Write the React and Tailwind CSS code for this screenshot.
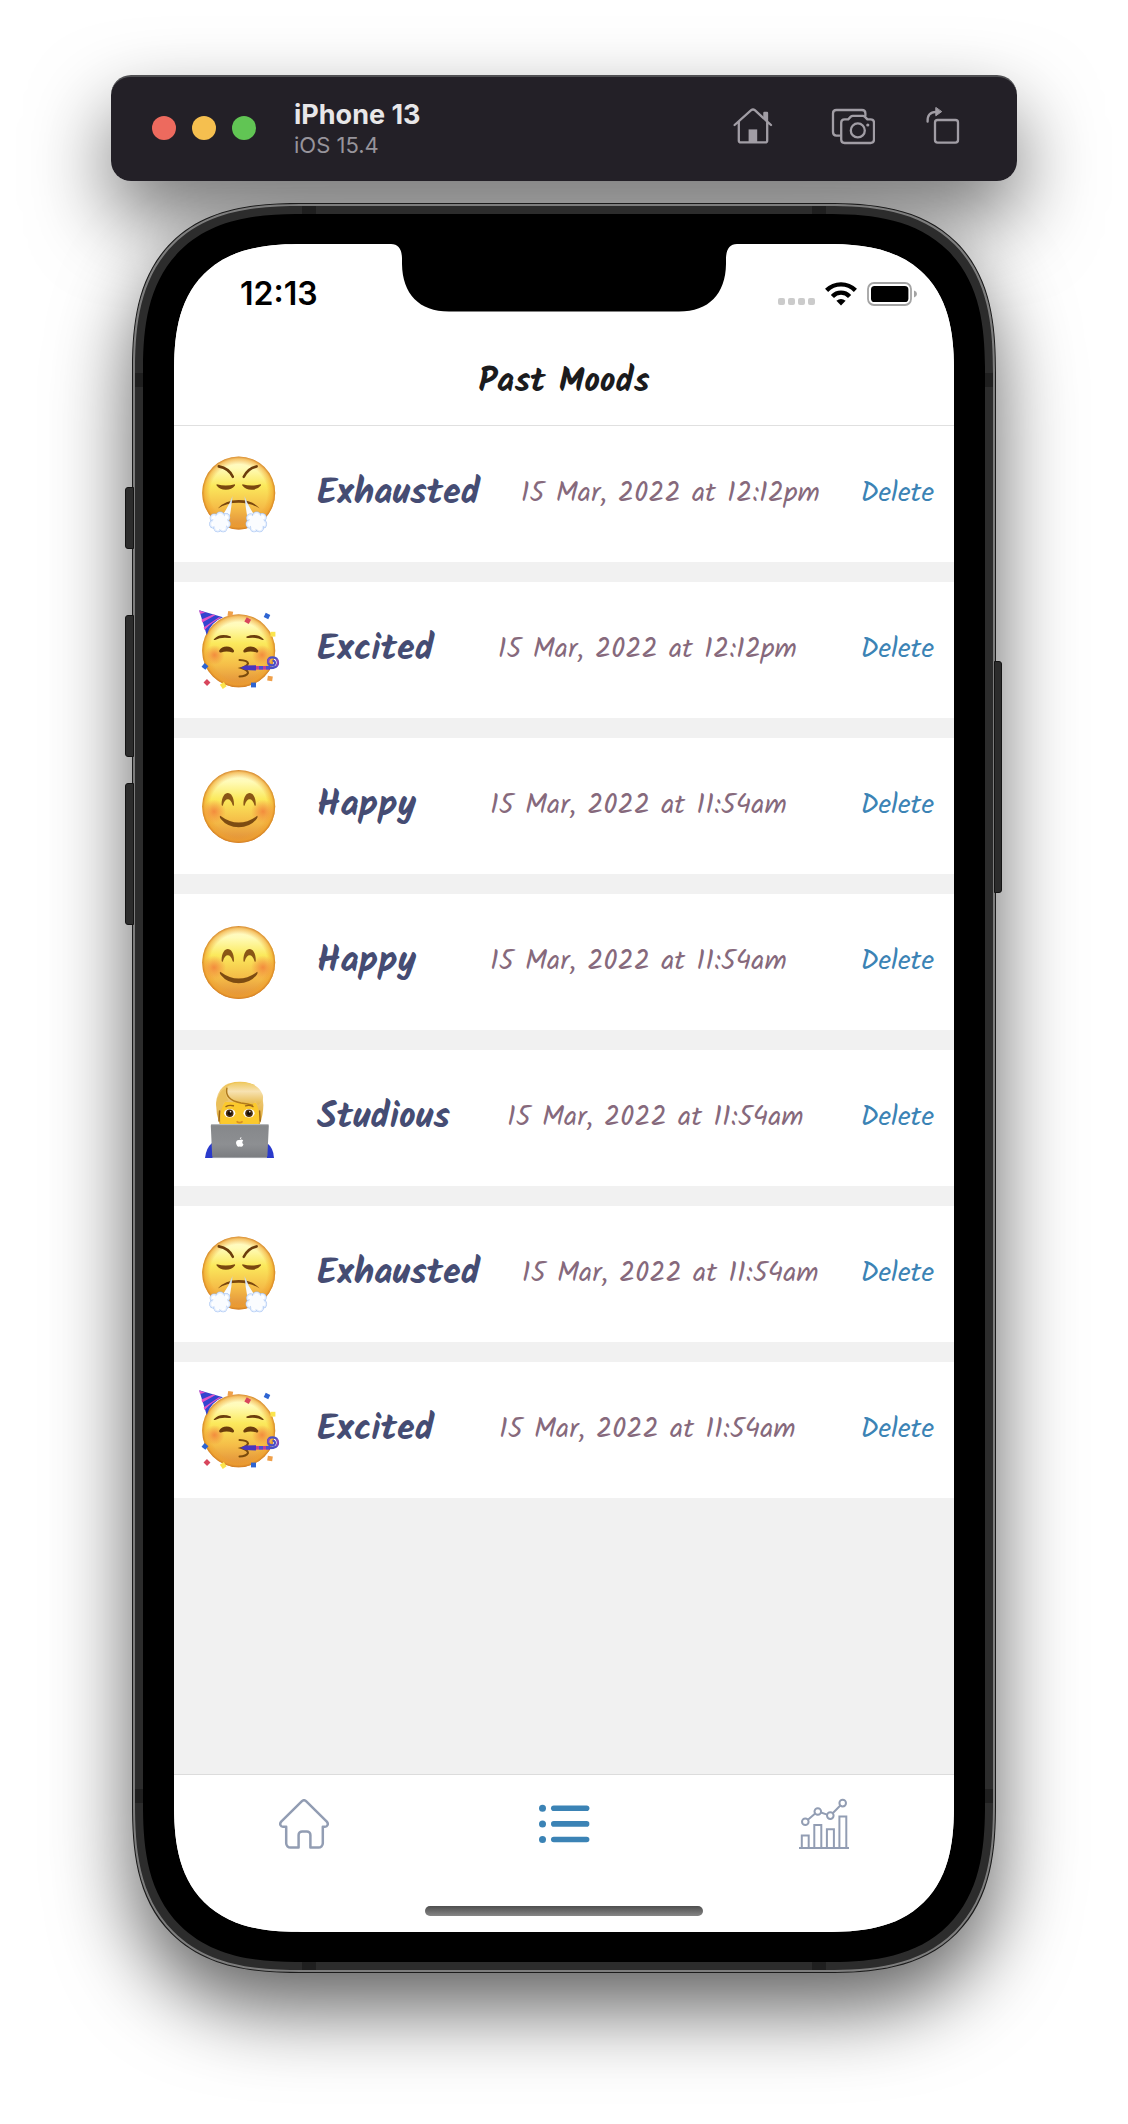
const HAND = 'font-["Kalam","Lato",sans-serif]';

const INK = '#6b3d0c';

function SharedGradients() {
  return (
    <svg className="absolute h-0 w-0" aria-hidden="true">
      <defs>
        <linearGradient id="face-fill" x1="0" y1="0" x2="0" y2="1">
          <stop offset="0" stopColor="#fff9cf" />
          <stop offset="0.16" stopColor="#fffbb8" />
          <stop offset="0.4" stopColor="#fbe95c" />
          <stop offset="0.7" stopColor="#f5bd48" />
          <stop offset="1" stopColor="#df8a38" />
        </linearGradient>
        <radialGradient id="face-rim">
          <stop offset="0.78" stopColor="#f0a22c" stopOpacity="0" />
          <stop offset="0.93" stopColor="#f0a22c" stopOpacity="0.6" />
          <stop offset="1" stopColor="#d07c22" stopOpacity="0.95" />
        </radialGradient>
        <radialGradient id="cheek">
          <stop offset="0" stopColor="#f2803a" stopOpacity="0.85" />
          <stop offset="1" stopColor="#f2803a" stopOpacity="0" />
        </radialGradient>
        <linearGradient id="steam" x1="0" y1="0" x2="0" y2="1">
          <stop offset="0" stopColor="#b5cff2" />
          <stop offset="0.5" stopColor="#f4f9ff" />
          <stop offset="1" stopColor="#ffffff" />
        </linearGradient>
        <radialGradient id="puff">
          <stop offset="0.4" stopColor="#ffffff" />
          <stop offset="0.8" stopColor="#dce9fd" />
          <stop offset="1" stopColor="#9dbdf0" />
        </radialGradient>
        <linearGradient id="hair" x1="0" y1="0" x2="0" y2="1">
          <stop offset="0" stopColor="#edc04e" />
          <stop offset="0.3" stopColor="#f2d084" />
          <stop offset="1" stopColor="#dca42c" />
        </linearGradient>
        <linearGradient id="fringe" x1="0" y1="0" x2="0" y2="1">
          <stop offset="0" stopColor="#efc95f" />
          <stop offset="0.4" stopColor="#f7e2b2" />
          <stop offset="1" stopColor="#e6b848" />
        </linearGradient>
        <linearGradient id="laptop" x1="0" y1="0" x2="0" y2="1">
          <stop offset="0" stopColor="#85878a" />
          <stop offset="0.6" stopColor="#8d8f92" />
          <stop offset="1" stopColor="#7a7c80" />
        </linearGradient>
      </defs>
    </svg>
  );
}

function Face({ cy }) {
  return (
    <>
      <circle cx="39.7" cy={cy} r="36.5" fill="url(#face-fill)" />
      <circle cx="39.7" cy={cy} r="36.5" fill="url(#face-rim)" />
    </>
  );
}

function Puff({ x }) {
  return (
    <g fill="url(#puff)">
      <circle cx={x - 6} cy="64" r="4.5" />
      <circle cx={x + 5.5} cy="63.5" r="4.5" />
      <circle cx={x - 6.5} cy="70" r="4.5" />
      <circle cx={x + 6} cy="70" r="4.5" />
      <circle cx={x - 2.5} cy="74" r="4.2" />
      <circle cx={x + 3} cy="74" r="4.2" />
      <circle cx={x} cy="62" r="4.5" />
      <circle cx={x} cy="68" r="7.4" fill="#fafcff" />
    </g>
  );
}

function ExhaustedEmoji() {
  return (
    <>
      <Face cy={38.9} />
      <g fill="none" stroke={INK} strokeLinecap="round" strokeWidth="2.6">
        <path d="M19.8 12.4Q30 14.4 33.8 22.8" />
        <path d="M57.6 12.4Q48.6 14.4 44.8 22.8" />
      </g>
      <g fill="#7a470f">
        <path d="M17.8 30.2q9 2.6 18 0q.8.6 0 1.6q-3 4-9 4t-9-4q-.8-1 0-1.6z" />
        <path d="M43.6 30.2q9 2.6 18 0q.8.6 0 1.6q-3 4-9 4t-9-4q-.8-1 0-1.6z" />
        <path d="M18.8 54.5Q26 46 39.7 46T60.6 54.5Q52 48.8 39.7 48.8T18.8 54.5z" />
      </g>
      <path d="M33.5 42Q30 52 23.5 61L30.5 64Q32.5 53 33.5 42z" fill="url(#steam)" />
      <path d="M45.5 42Q49 52 55.5 61L48.5 64Q46.5 53 45.5 42z" fill="url(#steam)" />
      <Puff x={21.2} />
      <Puff x={57.6} />
    </>
  );
}

const CONFETTI = [
  [31.3, 3.8, '#efa04a', 10],
  [48.7, 10.7, '#d8465c', 30],
  [68, 6, '#2d64d2', 25],
  [73.9, 24.2, '#fbe44d', 0],
  [6, 56.4, '#2d64d2', 40],
  [8, 72.5, '#d8465c', 45],
  [24.3, 75.5, '#fbe44d', 55],
  [54.5, 75, '#2d64d2', 0],
  [71, 68.5, '#efa04a', 8],
];

function ExcitedEmoji() {
  return (
    <>
      <Face cy={40.7} />
      <path d="M.2.2L24 7.3Q12 12 7.7 25z" fill="#3344cf" />
      <path d="M1 4L7.2 2.3l-2 0L.2.2zM2.5 9.5L14 4.4l2.6.7L3.2 12.5zM4.6 17.5L20 7.2l2 .5Q12 12.5 5.6 20z" fill="#e653c8" />
      <circle cx="15.5" cy="45" r="10" fill="url(#cheek)" />
      <circle cx="63" cy="45" r="10" fill="url(#cheek)" />
      <g fill={INK}>
        <path d="M14.8 29.2Q21 22.4 31.8 26.4Q33 28.4 30 28Q22 26.8 16 30Q14.6 30.4 14.8 29.2z" />
        <path d="M64.6 29.2Q58.4 22.4 47.6 26.4Q46.4 28.4 49.4 28Q57.4 26.8 63.4 30Q64.8 30.4 64.6 29.2z" />
        <path d="M20.2 40.6Q22.6 36.4 27.7 36.4T35 40.6Q35.4 42.8 33.4 42.4Q27.7 40.4 22 42.4Q19.6 42.8 20.2 40.6z" />
        <path d="M44.4 40.6Q46.8 36.4 51.7 36.4T59.2 40.6Q59.6 42.8 57.4 42.4Q51.7 40.4 46 42.4Q44 42.8 44.4 40.6z" />
      </g>
      <path d="M40.5 50Q48.6 50.4 49 53.4Q48 56.6 42.4 58Q49 60 49 63Q47.4 66.4 40.5 66.4" fill="none" stroke="#7a4a0c" strokeWidth="2" strokeLinecap="round" />
      <path d="M41.4 57.7L46 55.4L57 55.2V60.4L46 60z" fill="#4936bd" />
      <path d="M57 57.8H71" stroke="#c23d9a" strokeWidth="3.6" />
      <path d="M60 57.8h4M67 57.8h4" stroke="#4b50d0" strokeWidth="3.6" />
      <path d="M70 58.2Q79.4 58.2 79 52.4Q78.6 47.4 73.6 47.4T69 52Q69.4 55.4 72.8 55.4T76 52.4Q75.4 50.6 73.6 51" fill="none" stroke="#4b50c4" strokeWidth="2.2" />
      <path d="M77.6 56Q80 52 77.6 49.4M71 48.4Q68.8 50 69.4 53" fill="none" stroke="#8f4bb8" strokeWidth="1.8" />
      {CONFETTI.map(([x, y, color, turn]) => (
        <rect key={`${x}-${y}`} x={x - 2.5} y={y - 2.4} width="5" height="4.8" fill={color} transform={`rotate(${turn} ${x} ${y})`} />
      ))}
    </>
  );
}

function HappyEmoji() {
  return (
    <>
      <Face cy={40.5} />
      <circle cx="15" cy="45.5" r="12" fill="url(#cheek)" />
      <circle cx="64" cy="45.5" r="12" fill="url(#cheek)" />
      <g fill="#8a5716">
        <path d="M22.6 38.6C22.6 23.2 35 23.2 35 38.6Q34.6 41 33.6 39C31.6 31.4 26 31.4 24 39Q23 41 22.6 38.6z" />
        <path d="M44.4 38.6C44.4 23.2 56.8 23.2 56.8 38.6Q56.4 41 55.4 39C53.4 31.4 47.8 31.4 45.8 39Q44.8 41 44.4 38.6z" />
      </g>
      <path d="M21.2 49.8Q39.7 63.4 58.2 49.8Q59.2 50.8 57.6 53Q51 61.2 39.7 61.2T21.8 53Q20.2 50.8 21.2 49.8z" fill="#7d4c12" />
    </>
  );
}

function StudiousEmoji() {
  return (
    <>
      <path d="M6 80Q7 70 13 65H68Q74.6 70 75 80z" fill="#2a3acb" />
      <path d="M20.6 46Q17 36 17 26Q18 3.8 41 3.8T64.4 27Q64 38 60.8 46z" fill="url(#hair)" />
      <path d="M21.6 47Q20 32 26 24L57 25Q61.6 34 59.6 47z" fill="#fbc92c" />
      <path d="M27 10Q27.4 22 42 24.6Q50 25 54 26L56.4 23L59 27Q66 22 63.4 16Q58 4 41 4.2Q31.6 4.6 27 10z" fill="url(#fringe)" />
      <path d="M28 9.6Q25 21.6 42 25Q49 25.6 54 27.4" fill="none" stroke="#b07a1c" strokeWidth="1.5" />
      <path d="M26.4 10.6Q19.4 13 17.4 25Q17.2 30 20.6 33.6L24.6 24.4L29.4 22.6Q25.6 16 26.4 10.6z" fill="#eac05a" />
      <g fill="none" stroke="#9b6414" strokeWidth="1.4" strokeLinecap="round">
        <path d="M27 28.6q3-2 7.4-.8" />
        <path d="M46.6 27.8q4-1.2 7.4.8" />
        <path d="M20.6 33l-.6 10M60.6 33l.6 10" />
      </g>
      {[30.7, 50].map((x) => (
        <g key={x}>
          <ellipse cx={x} cy="35.2" rx="5.6" ry="4.2" fill="#fff" />
          <circle cx={x} cy="35.2" r="3.8" fill="#4b2e0e" />
          <circle cx={x} cy="35.2" r="2" fill="#17100a" />
          <circle cx={x + 0.8} cy="33.8" r="0.8" fill="#fff" />
        </g>
      ))}
      <path d="M37.6 43.4q3 2.6 6 0" fill="none" stroke="#d78f22" strokeWidth="1.6" />
      <path d="M11.8 48Q11.6 46 13.6 46H68Q70 46 69.8 48L68.4 78Q68.2 80 66 80H15.4Q13.4 80 13.2 78z" fill="url(#laptop)" />
      <path d="M12.2 46.6H69.4" stroke="#b9bbbe" strokeWidth="1" />
      <path d="M13.4 79.6H68" stroke="#b0b2b6" strokeWidth="0.8" />
      <path d="M40.8 62q1.8-1.2 3.4.4q-2 1.8.3 4q-1 2.6-2.5 2.3q-1.2-.5-2.4 0q-1.8-.2-2.6-3.8q.2-3.6 3.8-2.9zM40.7 61.4q0-1.9 1.8-2.4q.1 2-1.8 2.4z" fill="#fff" />
    </>
  );
}

const EMOJI = {
  Exhausted: ExhaustedEmoji,
  Excited: ExcitedEmoji,
  Happy: HappyEmoji,
  Studious: StudiousEmoji,
};

const MOODS = [
  { id: 1, name: 'Exhausted', date: '15 Mar, 2022 at 12:12pm' },
  { id: 2, name: 'Excited', date: '15 Mar, 2022 at 12:12pm' },
  { id: 3, name: 'Happy', date: '15 Mar, 2022 at 11:54am' },
  { id: 4, name: 'Happy', date: '15 Mar, 2022 at 11:54am' },
  { id: 5, name: 'Studious', date: '15 Mar, 2022 at 11:54am' },
  { id: 6, name: 'Exhausted', date: '15 Mar, 2022 at 11:54am' },
  { id: 7, name: 'Excited', date: '15 Mar, 2022 at 11:54am' },
];

function MoodRow({ mood }) {
  const Emoji = EMOJI[mood.name];
  return (
    <li className="flex h-[136px] items-center justify-between bg-white pr-5 pl-[25px]">
      <div className="flex items-center gap-[38px]">
        <svg viewBox="0 0 80 80" className="size-20 shrink-0 overflow-visible" aria-hidden="true">
          <Emoji />
        </svg>
        <h2 className={`${HAND} text-4xl leading-10 font-bold text-[#454c73]`}>{mood.name}</h2>
      </div>
      <time className={`${HAND} text-[28px] leading-8 text-[#86697c]`}>{mood.date}</time>
      <button type="button" className={`${HAND} text-[28px] leading-8 text-[#3b83b5]`} aria-label={`Delete ${mood.name}`}>
        Delete
      </button>
    </li>
  );
}

function SimulatorBar() {
  return (
    <div className="w-full rounded-[20px] shadow-[0_36px_80px_rgba(0,0,0,0.55)]">
      <header className="relative z-10 flex h-[106px] items-center rounded-[20px] border-t-2 border-[#505053] bg-[#232027] pr-[57px] pb-[3px] pl-[41px]">
        <div className="flex gap-4">
          <button type="button" aria-label="Close" className="size-6 rounded-full bg-[#ed6a5e]" />
          <button type="button" aria-label="Minimize" className="size-6 rounded-full bg-[#f5bf4f]" />
          <button type="button" aria-label="Zoom" className="size-6 rounded-full bg-[#61c554]" />
        </div>
        <div className='ml-[38px] flex-1 pt-[2px] font-["Inter",sans-serif]'>
          <h1 className="text-[27px] leading-8 font-bold text-[#e8e7e9]">iPhone 13</h1>
          <p className="text-[22px] leading-7 text-[#97949b]">iOS 15.4</p>
        </div>
        <div className="mb-1 flex items-center text-[#a19da5]">
          <button type="button" aria-label="Home">
            <svg viewBox="0 0 40 38" className="h-[38px] w-10" fill="none" stroke="currentColor" strokeWidth="2.3" strokeLinecap="round" strokeLinejoin="round">
              <path d="M1.6 18L18.2 3.2q1.8-1.4 3.6 0L38 18M5.8 15v18.4q0 2 2 2h24.4q2 0 2-2V15" />
              <path d="M31.4 11V6h2.6v8z" fill="currentColor" />
              <path d="M15.6 22.4h8.6V35h-8.6z" fill="currentColor" stroke="none" />
            </svg>
          </button>
          <button type="button" aria-label="Screenshot" className="ml-[58px]">
            <svg viewBox="0 0 44 38" className="h-[38px] w-11" fill="none" stroke="currentColor" strokeWidth="2.3" strokeLinecap="round" strokeLinejoin="round">
              <path d="M8.6 28.6H5.4Q2 28.6 2 25V6.4Q2 3 5.4 3H31Q34.4 3 34.4 6.4V8.5" />
              <path d="M13.6 12.4h3.6l2.6-2.8q.8-.8 2-.8h10q1.2 0 2 .8l2.6 2.8H39.6q3.4 0 3.4 3.4V32.6q0 3.4-3.4 3.4H13.6q-3.4 0-3.4-3.4V15.8q0-3.4 3.4-3.4z" />
              <circle cx="26.8" cy="23.4" r="7" />
              <circle cx="36.8" cy="18" r="1.6" fill="currentColor" stroke="none" />
            </svg>
          </button>
          <button type="button" aria-label="Rotate" className="ml-[51px]">
            <svg viewBox="0 0 34 38" className="h-[38px] w-[34px]" fill="none" stroke="currentColor" strokeWidth="2.3" strokeLinecap="round" strokeLinejoin="round">
              <path d="M1.6 14.6Q1 5.2 10 4.8" />
              <path d="M9.8.8V8.8L15.4 4.8z" fill="currentColor" strokeWidth="1" />
              <rect x="9" y="13" width="23" height="22.6" rx="2.6" />
            </svg>
          </button>
        </div>
      </header>
    </div>
  );
}

function Notch() {
  return (
    <svg viewBox="0 0 346 68" className="absolute top-0 left-1/2 h-[68px] w-[346px] -translate-x-1/2" aria-hidden="true">
      <path d="M0 0Q10.5 0 11 14V20C11.5 50 28 67.5 58 67.5H288C318 67.5 334.5 50 335 20V14Q335.5 0 346 0z" fill="#000" />
    </svg>
  );
}

function StatusBar() {
  return (
    <div className="flex h-[94px] items-center justify-between pt-[6px] pr-[36px] pl-[66px]">
      <span className='font-["Inter",sans-serif] text-[32px] leading-8 font-semibold text-black'>12:13</span>
      <div className="flex items-center gap-[10px]">
        <div className="mt-[15px] flex gap-[3px]">
          <span className="size-[7px] rounded-[2px] bg-[#cbcbcb]" />
          <span className="size-[7px] rounded-[2px] bg-[#cbcbcb]" />
          <span className="size-[7px] rounded-[2px] bg-[#cbcbcb]" />
          <span className="size-[7px] rounded-[2px] bg-[#cbcbcb]" />
        </div>
        <svg viewBox="0 0 32 24" className="h-6 w-8" fill="none" stroke="#000" strokeWidth="4.4" aria-hidden="true">
          <path d="M1.6 8.4Q7.6 2.4 16 2.4T30.4 8.4" />
          <path d="M7.4 14.4Q11 10.6 16 10.6T24.6 14.4" />
          <path d="M11.4 18.8Q16 15.2 20.6 18.8L16 23.6z" fill="#000" stroke="none" />
        </svg>
        <svg viewBox="0 0 51 24" className="h-6 w-[51px]" aria-hidden="true">
          <rect x="1" y="1" width="43" height="22" rx="6" fill="none" stroke="#a3a3a3" strokeWidth="1.8" />
          <rect x="4" y="4" width="37.4" height="16" rx="3.6" fill="#000" />
          <path d="M47 8.6Q50 9.6 50 12T47 15.4z" fill="#a3a3a3" />
        </svg>
      </div>
    </div>
  );
}

function TabBar() {
  return (
    <nav className="flex h-[158px] flex-col items-center justify-between border-t border-[#dcdcdc] bg-white pt-6 pb-4">
      <div className="grid w-full grid-cols-3 justify-items-center">
        <a href="#home" aria-label="Home" className="text-[#929db3]">
          <svg viewBox="0 0 50 50" className="size-[50px]" fill="none" stroke="currentColor" strokeWidth="2.5" strokeLinejoin="round">
            <path d="M22.7 2.3L2.2 22.6C.2 25 1.6 27.8 4 27.8H7.2V44.3A4.3 4.3 0 0 0 11.5 48.6H19.6V36A3.6 3.6 0 0 1 23.2 32.4H27.8A3.6 3.6 0 0 1 31.4 36V48.6H39.5A4.3 4.3 0 0 0 43.8 44.3V27.8H46C48.4 27.8 49.8 25 47.8 22.6L27.3 2.3Q25 .2 22.7 2.3z" />
          </svg>
        </a>
        <a href="#history" aria-label="Past moods" aria-current="page" className="text-[#3b83b5]">
          <svg viewBox="0 0 50 50" className="size-[50px] overflow-visible" fill="currentColor">
            {[9.3, 24.9, 40.5].map((y) => (
              <g key={y}>
                <circle cx="3.5" cy={y} r="3.5" />
                <rect x="12" y={y - 2.8} width="38.4" height="5.6" rx="2.8" />
              </g>
            ))}
          </svg>
        </a>
        <a href="#analytics" aria-label="Analytics" className="text-[#929db3]">
          <svg viewBox="0 0 50 50" className="size-[50px] overflow-visible" fill="none" stroke="currentColor" strokeWidth="2">
            <circle cx="6.3" cy="22.8" r="3.3" />
            <circle cx="18.8" cy="12.5" r="3.3" />
            <circle cx="31.3" cy="16.6" r="3.3" />
            <circle cx="43.7" cy="4.1" r="3.3" />
            <path d="M8.9 20.7L16.2 14.6M22 13.5L28.1 15.6M33.7 14.2L41.3 6.5" />
            <path d="M2.8 49V36.6H9.7V49M15.3 49V26H22.3V49M27.9 49V30.2H34.9V49M40.4 49V17.6H47.3V49M0 49H50" />
          </svg>
        </a>
      </div>
      <div className="h-[10px] w-[278px] rounded-full bg-gradient-to-b from-[#4f4f4f] to-[#868686]" />
    </nav>
  );
}

function FrameDetails() {
  return (
    <div aria-hidden="true">
      <span className="absolute top-[283px] -left-[8px] h-[62px] w-[9px] rounded-l-[3px] border border-[#141414] bg-[#2c2c2c]" />
      <span className="absolute top-[411px] -left-[8px] h-[142px] w-[9px] rounded-l-[3px] border border-[#141414] bg-[#2c2c2c]" />
      <span className="absolute top-[579px] -left-[8px] h-[142px] w-[9px] rounded-l-[3px] border border-[#141414] bg-[#2c2c2c]" />
      <span className="absolute top-[457px] -right-[7px] h-[232px] w-[8px] rounded-r-[3px] border border-[#141414] bg-[#2c2c2c]" />
      <span className="absolute top-[2px] left-[169px] h-2 w-[14px] bg-[#1f1f1f]" />
      <span className="absolute top-[2px] right-[169px] h-2 w-[14px] bg-[#1f1f1f]" />
      <span className="absolute bottom-[2px] left-[169px] h-2 w-[14px] bg-[#1f1f1f]" />
      <span className="absolute right-[169px] bottom-[2px] h-2 w-[14px] bg-[#1f1f1f]" />
      <span className="absolute top-[169px] left-[2px] h-[14px] w-2 bg-[#1f1f1f]" />
      <span className="absolute top-[169px] right-[2px] h-[14px] w-2 bg-[#1f1f1f]" />
      <span className="absolute bottom-[169px] left-[2px] h-[14px] w-2 bg-[#1f1f1f]" />
      <span className="absolute right-[2px] bottom-[169px] h-[14px] w-2 bg-[#1f1f1f]" />
    </div>
  );
}

export default function App() {
  return (
    <main className="flex min-h-screen flex-col items-center bg-white px-4 pt-[75px] pb-[151px]">
      <SharedGradients />
      <div className="flex w-full max-w-[906px] flex-col items-center gap-[22px]">
        <SimulatorBar />
        <section className="relative w-full max-w-[864px] rounded-[136px] border border-[#1b1b1b] bg-[#7d7d7d] p-[2px] shadow-[0_36px_80px_rgba(0,0,0,0.62)] supports-[corner-shape:squircle]:rounded-[170px] supports-[corner-shape:squircle]:[corner-shape:superellipse(1.4)]">
          <div className="rounded-[133px] border-8 border-[#2c2c2c] bg-black px-[31px] py-[30px] supports-[corner-shape:squircle]:rounded-[167px] supports-[corner-shape:squircle]:[corner-shape:superellipse(1.4)]">
            <div className="relative flex min-h-[1688px] flex-col overflow-hidden rounded-[98px] bg-[#f1f1f1] supports-[corner-shape:squircle]:rounded-[130px] supports-[corner-shape:squircle]:[corner-shape:superellipse(1.4)]">
              <Notch />
              <div className="border-b border-[#e0e0e0] bg-white">
                <StatusBar />
                <div className="flex h-[87px] items-center justify-center">
                  <h2 className={`${HAND} text-[34px] leading-10 font-bold text-[#1b1b1d]`}>Past Moods</h2>
                </div>
              </div>
              <ul className="flex flex-1 flex-col gap-5">
                {MOODS.map((mood) => (
                  <MoodRow key={mood.id} mood={mood} />
                ))}
              </ul>
              <TabBar />
            </div>
          </div>
          <FrameDetails />
        </section>
      </div>
    </main>
  );
}
